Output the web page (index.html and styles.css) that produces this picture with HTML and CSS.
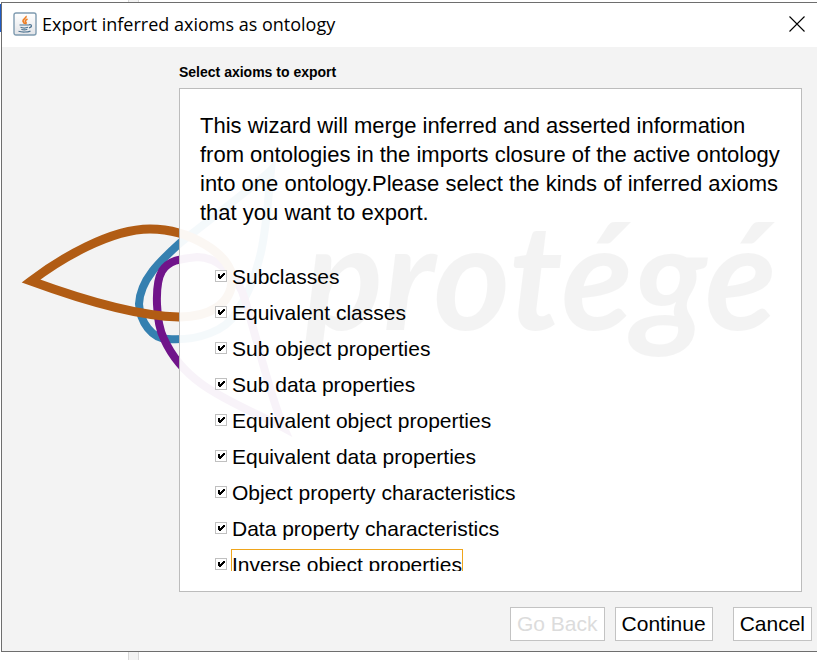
FILE: index.html
```html
<!DOCTYPE html>
<html lang="en">
<head>
    <meta charset="UTF-8">
    <meta name="viewport" content="width=device-width, initial-scale=1.0">
    <title>Export inferred axioms as ontology</title>
    <link rel="stylesheet" href="styles.css">
</head>
<body>
    <div class="backdrop-bar"></div>
    <div class="backdrop-accent"></div>

    <main class="dialog">
        <header class="title-bar">
            <svg class="java-icon" viewBox="0 0 24 24" aria-hidden="true">
                <defs>
                    <linearGradient id="tile" x1="0" y1="0" x2="0" y2="1">
                        <stop offset="0" stop-color="#ffffff"/>
                        <stop offset="1" stop-color="#e2e4e8"/>
                    </linearGradient>
                </defs>
                <rect x="1" y="1" width="22" height="22" rx="2" fill="url(#tile)" stroke="#7f9bb0" stroke-width="1.4"/>
                <path d="M13 4c1 2-3.500 3-3 5 .2 1.200 1.500 1.800 1.500 3M14.500 7c-2 1-2.800 2-1.800 3 .6.700.5 1.300-.4 2" fill="none" stroke="#ee7d22" stroke-width="1.700"/>
                <path d="M6.500 13h9.500M7.500 15.300c2 .8 5.500.8 7.500 0M8.300 17.300c1.500.6 4.500.6 6 0M5.500 19.300c3 1 9 1 12-.2M16 12.800c3-.8 3.500 2.200 0 3" fill="none" stroke="#4f7592" stroke-width="1.200"/>
            </svg>
            <h1>Export inferred axioms as ontology</h1>
            <button class="close" type="button" aria-label="Close">
                <svg viewBox="0 0 16 16" aria-hidden="true"><path d="M.5.5l15 15M15.500.5l-15 15" stroke="#000" stroke-width="1.100"/></svg>
            </button>
        </header>

        <div class="content">
            <svg class="logo" viewBox="20 150 760 300" aria-hidden="true">
                <g fill="none" stroke-width="8">
                    <path stroke="#3580b0" d="M271 170C258 183 212 218 180 243C160 261 140 280 139 304C140 322 152 339 168 339C200 341 226 330 236 313C266 268 266 218 271 170Z"/>
                    <path stroke="#70148a" d="M284 428C270 396 260 350 245 300C238 275 217 257 197 257C180 259 169 260 162 271C154 285 156 323 164 339C186 388 235 402 284 428Z"/>
                    <path stroke="#b15c14" stroke-width="9" stroke-miterlimit="8" d="M31 281C60 259 110 229 150 229C190 229 232 255 232 279C232 305 208 317 179 317C135 316 80 299 31 281Z"/>
                </g>
                <text class="logo-text" x="304" y="330">protégé</text>
            </svg>

            <section class="step">
                <h2>Select axioms to export</h2>
                <div class="panel">
                    <p>This wizard will merge inferred and asserted information from ontologies in the imports closure of the active ontology into one ontology.Please select the kinds of inferred axioms that you want to export.</p>
                    <div class="axiom-list">
                        <label><input type="checkbox" checked><span>Subclasses</span></label>
                        <label><input type="checkbox" checked><span>Equivalent classes</span></label>
                        <label><input type="checkbox" checked><span>Sub object properties</span></label>
                        <label><input type="checkbox" checked><span>Sub data properties</span></label>
                        <label><input type="checkbox" checked><span>Equivalent object properties</span></label>
                        <label><input type="checkbox" checked><span>Equivalent data properties</span></label>
                        <label><input type="checkbox" checked><span>Object property characteristics</span></label>
                        <label><input type="checkbox" checked><span>Data property characteristics</span></label>
                        <label><input type="checkbox" checked><span class="current">Inverse object properties</span></label>
                    </div>
                </div>
            </section>

            <footer class="actions">
                <button type="button" disabled>Go Back</button>
                <button type="button">Continue</button>
                <button class="cancel" type="button">Cancel</button>
            </footer>
        </div>
    </main>
</body>
</html>
```

FILE: styles.css
```css
* {
    box-sizing: border-box;
}
body {
    margin: 0;
    height: 100vh;
    display: flex;
    padding: 2px 0 8px 1px;
    overflow: hidden;
    background-color: #fff;
    color: #000;
    font-family: "Liberation Sans", Arial, sans-serif;
    font-size: 21px;
}

/* Window showing behind the dialog */
.backdrop-bar {
    position: absolute;
    top: 0;
    bottom: 0;
    left: 128px;
    width: 11px;
    background-color: #f3f3f3;
    border: solid #d8d8d8;
    border-width: 0 1px;
}
.backdrop-accent {
    position: absolute;
    top: 4px;
    left: 0;
    width: 1px;
    height: 28px;
    background-color: #1f5bc4;
}

.dialog {
    position: relative;
    flex: 1;
    display: flex;
    flex-direction: column;
    border: 1px solid #6e6e6e;
    border-right: none;
    background-color: #f3f3f3;
}

/* Title bar */
.title-bar {
    display: flex;
    align-items: center;
    height: 44px;
    padding: 0 12px 2px 11px;
    background-color: #fff;
}
.java-icon {
    width: 24px;
    height: 24px;
}
.title-bar h1 {
    flex: 1;
    margin: 0 0 0 5px;
    font-family: "Open Sans", "Noto Sans", sans-serif;
    font-size: 18px;
    font-weight: normal;
    line-height: 24px;
}
.close {
    display: flex;
    padding: 0;
    border: none;
    background: none;
}
.close svg {
    width: 16px;
    height: 16px;
}

.content {
    position: relative;
    flex: 1;
    min-height: 0;
    display: flex;
    flex-direction: column;
    padding: 16px 5px 10px 177px;
}
.logo {
    position: absolute;
    top: 103px;
    left: 18px;
    width: 760px;
    height: 300px;
}
.logo-text {
    fill: #222;
    font-family: Lato, sans-serif;
    font-size: 147px;
    font-style: italic;
    font-weight: bold;
}

/* Wizard step, the panel lets a faint logo through */
.step {
    position: relative;
    flex: 1;
    min-height: 0;
    display: flex;
    flex-direction: column;
    margin-right: 10px;
}
.step h2 {
    margin: 0 0 7px;
    font-size: 14px;
    line-height: 18px;
}
.panel {
    flex: 1;
    min-height: 0;
    display: flex;
    flex-direction: column;
    padding: 22px 20px 20px;
    border: 1px solid #bcbcbc;
    background-color: rgba(255, 255, 255, 0.95);
}
.panel p {
    margin: 0 0 32px;
    font-size: 22px;
    line-height: 29px;
}
.axiom-list {
    flex: 1;
    min-height: 0;
    display: flex;
    flex-direction: column;
    align-items: flex-start;
    padding-left: 15px;
    overflow: hidden;
}
.axiom-list label {
    flex: none;
    display: flex;
    align-items: center;
    gap: 4px;
    height: 36px;
}
.axiom-list input {
    appearance: none;
    width: 12px;
    height: 12px;
    margin: 0 0 2px;
    border: 1px solid #c0c0c0;
    background: #fff url("data:image/svg+xml,%3Csvg xmlns='http://www.w3.org/2000/svg' viewBox='0 0 10 10'%3E%3Cpath d='M2 3h2v2h1v-1h1v-1h1v-1h2v2h-1v1h-1v1h-1v1h-1v1h-2v-1h-1z'/%3E%3C/svg%3E") center / 10px 10px no-repeat;
}
.axiom-list span {
    height: 32px;
    border: 1px solid transparent;
    line-height: 30px;
}
.axiom-list .current {
    border-color: #efa51c;
}

/* Buttons */
.actions {
    position: relative;
    display: flex;
    justify-content: flex-end;
    gap: 10px;
    margin-top: 15px;
}
.actions button {
    height: 34px;
    padding: 0 6px;
    border: 1px solid #c3c3c3;
    background-color: #fff;
    color: #000;
    font-family: inherit;
    font-size: 21px;
}
.actions button:disabled {
    color: #dcdcdc;
}
.actions .cancel {
    margin-left: 10px;
}
```
